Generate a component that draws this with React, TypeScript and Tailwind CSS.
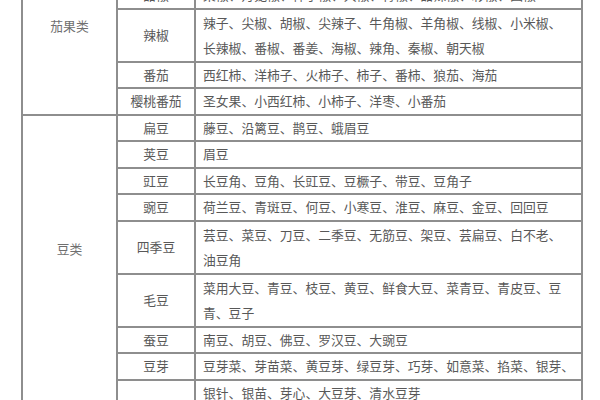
import React from 'react';

interface Row {
  name: string;
  items: string[];
  tall?: boolean;
}

const fruitRows: Row[] = [
  { name: '甜椒', items: ['菜椒、灯笼椒、柿子椒、大椒、青椒、甜辣椒、彩椒、圆椒'] },
  {
    name: '辣椒',
    items: ['辣子、尖椒、胡椒、尖辣子、牛角椒、羊角椒、线椒、小米椒、', '长辣椒、番椒、番姜、海椒、辣角、秦椒、朝天椒'],
    tall: true,
  },
  { name: '番茄', items: ['西红柿、洋柿子、火柿子、柿子、番柿、狼茄、海茄'] },
  { name: '樱桃番茄', items: ['圣女果、小西红柿、小柿子、洋枣、小番茄'] },
];

const beanRows: Row[] = [
  { name: '扁豆', items: ['藤豆、沿篱豆、鹊豆、蛾眉豆'] },
  { name: '荚豆', items: ['眉豆'] },
  { name: '豇豆', items: ['长豆角、豆角、长豇豆、豆橛子、带豆、豆角子'] },
  { name: '豌豆', items: ['荷兰豆、青斑豆、何豆、小寒豆、淮豆、麻豆、金豆、回回豆'] },
  {
    name: '四季豆',
    items: ['芸豆、菜豆、刀豆、二季豆、无筋豆、架豆、芸扁豆、白不老、', '油豆角'],
    tall: true,
  },
  {
    name: '毛豆',
    items: ['菜用大豆、青豆、枝豆、黄豆、鲜食大豆、菜青豆、青皮豆、豆', '青、豆子'],
    tall: true,
  },
  { name: '蚕豆', items: ['南豆、胡豆、佛豆、罗汉豆、大豌豆'] },
  { name: '豆芽', items: ['豆芽菜、芽苗菜、黄豆芽、绿豆芽、巧芽、如意菜、掐菜、银芽、'] },
  { name: '', items: ['银针、银苗、芽心、大豆芽、清水豆芽'] },
];

const cell = 'border-2 border-[#8e8e8e]';

const TypeRows = ({ label, rows, labelPad }: { label: string; rows: Row[]; labelPad: string }) => (
  <>
    {rows.map((row, i) => (
      <tr key={i} className={row.tall ? 'h-[53px]' : 'h-[26.5px]'}>
        {i === 0 && (
          <td rowSpan={rows.length} className={`${cell} align-top text-center text-[#6f6f6f] ${labelPad}`}>
            {label}
          </td>
        )}
        <td className={`${cell} text-center align-middle leading-[20px]`}>{row.name}</td>
        <td className={`${cell} align-middle pl-[7px] whitespace-nowrap ${row.tall ? 'leading-[25px]' : 'leading-[20px]'}`}>
          {row.items.map((line, j) => (
            <div key={j}>{line}</div>
          ))}
        </td>
      </tr>
    ))}
  </>
);

export default function App() {
  return (
    <div
      className="w-[600px] h-[400px] overflow-hidden bg-white"
      style={{ fontFamily: '"Noto Sans CJK SC", "Noto Sans", sans-serif' }}
    >
      <table className="table-fixed border-collapse ml-[21px] -mt-[19px] text-[12.8px] text-[#585858]">
        <colgroup>
          <col className="w-[95px]" />
          <col className="w-[78px]" />
          <col className="w-[387px]" />
        </colgroup>
        <tbody>
          <TypeRows label="茄果类" rows={fruitRows} labelPad="pt-[33px]" />
          <TypeRows label="豆类" rows={beanRows} labelPad="pt-[123px]" />
        </tbody>
      </table>
    </div>
  );
}
